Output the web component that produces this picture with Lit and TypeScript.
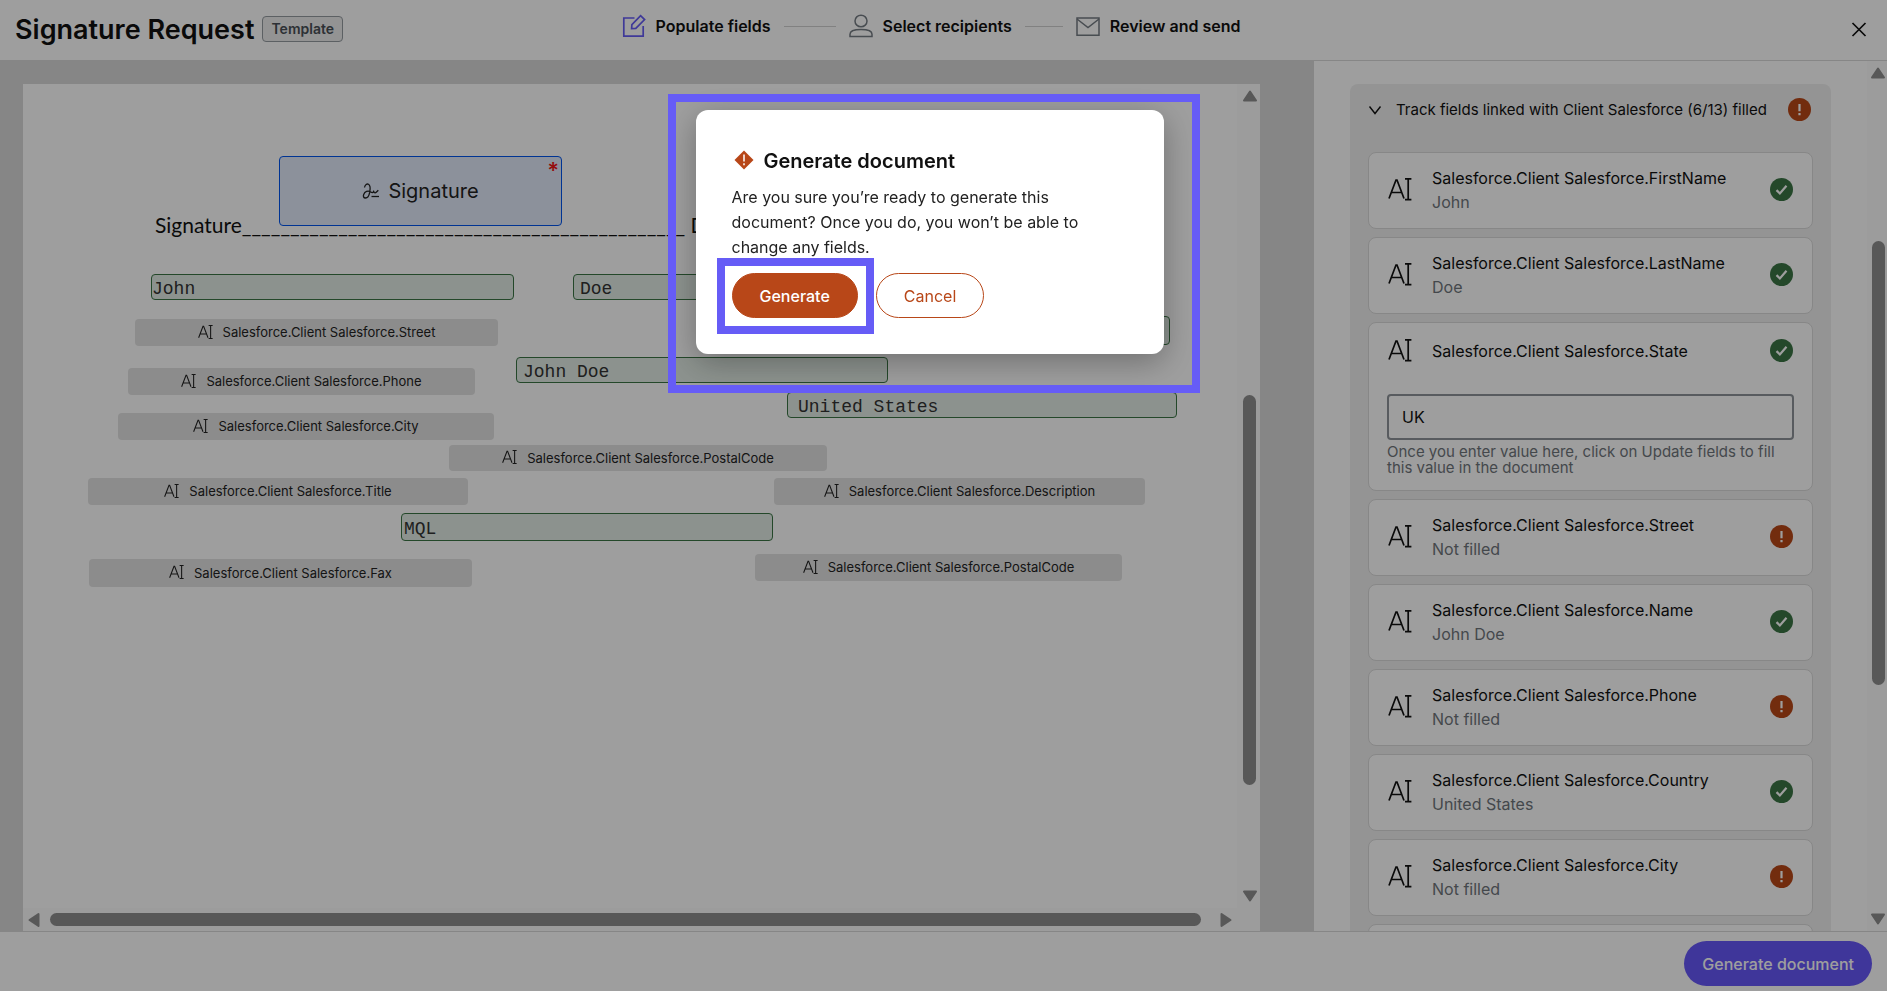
import { LitElement, html, css, svg, nothing } from "lit";
import { customElement, property, state } from "lit/decorators.js";
import { classMap } from "lit/directives/class-map.js";
import { styleMap } from "lit/directives/style-map.js";

interface TrackedField {
  name: string;
  value: string;
  filled: boolean;
  editable?: boolean;
}

interface Placement {
  x: number;
  y: number;
  w: number;
  h: number;
  text: string;
  pad?: number;
}

const PREFIX = "Salesforce.Client Salesforce.";

const TRACKED: TrackedField[] = [
  { name: "FirstName", value: "John", filled: true },
  { name: "LastName", value: "Doe", filled: true },
  { name: "State", value: "UK", filled: true, editable: true },
  { name: "Street", value: "Not filled", filled: false },
  { name: "Name", value: "John Doe", filled: true },
  { name: "Phone", value: "Not filled", filled: false },
  { name: "Country", value: "United States", filled: true },
  { name: "City", value: "Not filled", filled: false },
  { name: "PostalCode", value: "Not filled", filled: false },
];

/* Positions are measured from the corner of the paper. */
const EMPTY_FIELDS: Placement[] = [
  { x: 112, y: 235, w: 363, h: 27, text: "Street" },
  { x: 105, y: 284, w: 347, h: 27, text: "Phone" },
  { x: 95, y: 329, w: 376, h: 27, text: "City" },
  { x: 426, y: 361, w: 378, h: 26, text: "PostalCode" },
  { x: 65, y: 394, w: 380, h: 27, text: "Title" },
  { x: 751, y: 394, w: 371, h: 27, text: "Description" },
  { x: 66, y: 475, w: 383, h: 28, text: "Fax" },
  { x: 732, y: 470, w: 367, h: 27, text: "PostalCode" },
];

const FILLED_FIELDS: Placement[] = [
  { x: 128, y: 190, w: 363, h: 26, text: "John", pad: 0 },
  { x: 550, y: 190, w: 360, h: 26, text: "Doe", pad: 6 },
  { x: 777, y: 232, w: 370, h: 29, text: "UK", pad: 6 },
  { x: 493, y: 273, w: 372, h: 26, text: "John Doe", pad: 6 },
  { x: 764, y: 308, w: 390, h: 26, text: "United States", pad: 10 },
  { x: 378, y: 429, w: 372, h: 28, text: "MQL", pad: 2 },
];

const textFieldIcon = (size: number) => html`
  <svg width=${size} height=${size} viewBox="0 0 24 24" fill="none" stroke="currentColor" stroke-width="1.7" aria-hidden="true">
    <path d="M1 20.5 8 2h1L16 20.5M3.8 14.5h9.6" />
    <path d="M17 .9h6.400M17 21.600h6.400M20.200 .9v20.700" />
  </svg>
`;

const statusIcon = (filled: boolean) => html`
  <svg class="status" width="24" height="24" viewBox="0 0 24 24" role="img" aria-label=${filled ? "Filled" : "Not filled"}>
    <circle cx="11.5" cy="11.5" r="11.5" fill=${filled ? "#3a7444" : "#b84718"} />
    ${filled
      ? svg`<path d="M6.500 12.100l3.400 3.400 6.600-7.800" fill="none" stroke="#fff" stroke-width="2.2" />`
      : svg`<path d="M11.500 6v7.200M11.500 14.900v2.400" fill="none" stroke="#fff" stroke-width="2.2" />`}
  </svg>
`;

const arrow = (dir: "up" | "down" | "left" | "right") => {
  const turn = { up: 0, right: 90, down: 180, left: 270 }[dir];
  return html`
    <svg width="16" height="16" viewBox="0 0 16 16" aria-hidden="true">
      <path
        d="M8 3.5 14 12.5H2z"
        transform=${`rotate(${turn} 8 8)`}
        fill="#8e8e8e"
        stroke="#8e8e8e"
        stroke-width="2"
        stroke-linejoin="round"
      />
    </svg>
  `;
};

@customElement("scroll-rail")
class ScrollRail extends LitElement {
  @property() axis: "x" | "y" = "y";
  @property({ type: Number }) before = 0;
  @property({ type: Number }) size = 1;
  @property({ type: Number }) after = 0;

  static styles = css`
    :host {
      display: block;
      background: #fcfcfc;
    }
    .rail {
      display: flex;
      align-items: center;
      gap: 8px;
      height: 100%;
      box-sizing: border-box;
    }
    .y {
      flex-direction: column;
      padding: 4px 0 4px 2px;
    }
    .x {
      padding: 0 3px;
    }
    .track {
      display: flex;
      flex: 1;
      min-width: 0;
      min-height: 0;
    }
    .y .track {
      flex-direction: column;
      width: 13px;
    }
    .x .track {
      height: 13px;
    }
    .thumb {
      background: #8e8e8e;
      border-radius: 7px;
    }
    svg {
      flex: none;
    }
  `;

  render() {
    const vertical = this.axis === "y";
    return html`
      <div class=${classMap({ rail: true, y: vertical, x: !vertical })}>
        ${arrow(vertical ? "up" : "left")}
        <div class="track">
          <div style=${styleMap({ flexGrow: String(this.before) })}></div>
          <div class="thumb" style=${styleMap({ flexGrow: String(this.size) })}></div>
          <div style=${styleMap({ flexGrow: String(this.after) })}></div>
        </div>
        ${arrow(vertical ? "down" : "right")}
      </div>
    `;
  }
}

@customElement("field-card")
class FieldCard extends LitElement {
  @property({ attribute: false }) field!: TrackedField;

  static styles = css`
    :host {
      display: block;
    }
    .card {
      box-sizing: border-box;
      background: #fff;
      border: 1px solid #dadada;
      border-radius: 8px;
      padding: 13px 18px 14px;
      line-height: 24px;
    }
    .row {
      display: flex;
      align-items: center;
      gap: 20px;
      padding-left: 1px;
    }
    .names {
      flex: 1;
      min-width: 0;
    }
    .names > * {
      display: block;
    }
    .name {
      color: #111;
    }
    .value {
      color: #6f757b;
    }
    svg {
      flex: none;
    }
    .editable .row {
      height: 30px;
      margin-bottom: 28px;
    }
    .input {
      display: block;
      box-sizing: border-box;
      width: 100%;
      height: 46px;
      border: 2px solid #8e9499;
      border-radius: 4px;
      padding: 0 13px;
      background: #fff;
      color: #111;
      font: inherit;
    }
    .hint {
      margin: 4px 0 0;
      font-size: 15px;
      line-height: 16px;
      color: #6f757b;
    }
  `;

  render() {
    const { name, value, filled, editable } = this.field;
    return html`
      <div class=${classMap({ card: true, editable: !!editable })}>
        <div class="row">
          ${textFieldIcon(24)}
          <div class="names">
            ${editable
              ? html`<label class="name" for="value">${PREFIX}${name}</label>`
              : html`<span class="name">${PREFIX}${name}</span><span class="value">${value}</span>`}
          </div>
          ${statusIcon(filled)}
        </div>
        ${editable
          ? html`
              <input class="input" id="value" type="text" .value=${value} aria-describedby="hint" />
              <p class="hint" id="hint">Once you enter value here, click on Update fields to fill this value in the document</p>
            `
          : nothing}
      </div>
    `;
  }
}

@customElement("confirm-dialog")
class ConfirmDialog extends LitElement {
  static styles = css`
    :host {
      position: fixed;
      inset: 0;
      display: flex;
      justify-content: center;
      align-items: flex-start;
      padding: 110px 28px 0 0;
      background: rgba(0, 0, 0, 0.38);
    }
    .dialog {
      position: relative;
      box-sizing: border-box;
      width: 468px;
      padding: 38px 36px 36px;
      background: #fff;
      border-radius: 12px;
      box-shadow: 0 8px 32px rgba(0, 0, 0, 0.3);
    }
    .title {
      display: flex;
      align-items: center;
      gap: 8px;
      margin: 0 0 11px;
      font-size: 20px;
      font-weight: 600;
      line-height: 26px;
      color: #111;
    }
    .message {
      margin: 0 0 13px;
      max-width: 352px;
      line-height: 25px;
      color: #222;
    }
    .actions {
      display: flex;
      gap: 18px;
    }
    .slot {
      position: relative;
    }
    .button {
      box-sizing: border-box;
      height: 45px;
      padding: 0 27px;
      border: 1px solid #b84718;
      border-radius: 23px;
      background: #fff;
      color: #b84718;
      font: inherit;
    }
    .primary {
      background: #b84718;
      color: #fff;
      font-weight: 500;
    }
    .marker {
      position: absolute;
      border: 8px solid #665cf6;
      pointer-events: none;
    }
    .around-dialog {
      inset: -16px -36px -39px -28px;
    }
    .around-button {
      inset: -15px -16px -16px -15px;
    }
  `;

  render() {
    return html`
      <div class="dialog" role="dialog" aria-modal="true" aria-labelledby="title">
        <h2 class="title" id="title">
          <svg width="24" height="24" viewBox="0 0 24 24" aria-hidden="true">
            <path d="M12 1.5 21.5 11 12 20.5 2.5 11z" fill="#b84718" />
            <path d="M12 5.5v7M12 14.2v2" stroke="#fff" stroke-width="1.5" />
          </svg>
          Generate document
        </h2>
        <p class="message">Are you sure you’re ready to generate this document? Once you do, you won’t be able to change any fields.</p>
        <div class="actions">
          <div class="slot">
            <button class="button primary" type="button">Generate</button>
            <div class="marker around-button"></div>
          </div>
          <button class="button" type="button">Cancel</button>
        </div>
        <div class="marker around-dialog"></div>
      </div>
    `;
  }
}

@customElement("app-root")
class AppRoot extends LitElement {
  @state() private expanded = true;

  static styles = css`
    :host {
      display: grid;
      grid-template-rows: auto minmax(0, 1fr) auto;
      height: 100vh;
      overflow: hidden;
      background: #fff;
      color: #111;
      font: 16px/24px Inter, "Liberation Sans", sans-serif;
    }
    .top {
      display: grid;
      grid-template-columns: 1fr auto 1fr;
      align-items: center;
      box-sizing: border-box;
      height: 61px;
      padding: 0 16px 0 15px;
      border-bottom: 1px solid #d9d9d9;
    }
    .heading {
      display: flex;
      align-items: center;
      gap: 8px;
    }
    .title {
      margin: 0;
      font-size: 27px;
      font-weight: 600;
      line-height: 32px;
    }
    .badge {
      margin-bottom: 2px;
      padding: 0 8px;
      border: 1px solid #959ba0;
      border-radius: 4px;
      background: #ededed;
      color: #4a5056;
      font-size: 14px;
      font-weight: 600;
    }
    .steps {
      display: flex;
      align-items: center;
      gap: 13px;
      margin: 0 24px 8px 0;
      padding: 0;
      list-style: none;
      font-weight: 600;
    }
    .step {
      display: flex;
      align-items: center;
      gap: 10px;
      color: #757c84;
    }
    .step.current {
      color: #665cf6;
    }
    .step .label {
      color: #111;
    }
    .join {
      width: 52px;
      height: 1px;
      background: #d0d0d0;
    }
    .join.short {
      width: 38px;
    }
    .close {
      justify-self: end;
      display: grid;
      padding: 0;
      border: 0;
      background: none;
      color: #111;
    }
    .body {
      display: grid;
      grid-template-columns: minmax(0, 1fr) 573px;
      min-height: 0;
    }
    .desk {
      display: grid;
      padding: 23px 54px 0 23px;
      background: #d9d9d9;
      min-height: 0;
    }
    .viewer {
      display: grid;
      grid-template-columns: minmax(0, 1fr) 23px;
      grid-template-rows: minmax(0, 1fr) 23px;
      background: #fcfcfc;
    }
    .paper {
      position: relative;
      overflow: hidden;
      background: #fff;
    }
    .line {
      position: absolute;
      left: 132px;
      top: 129px;
      margin: 0;
      font: 21px/24px Lato, "Open Sans", sans-serif;
      white-space: nowrap;
    }
    .signature {
      position: absolute;
      box-sizing: border-box;
      display: flex;
      align-items: center;
      justify-content: center;
      gap: 8px;
      border: 1px solid #0055ee;
      border-radius: 4px;
      background: #e3ebfb;
      color: #222;
      font-size: 20px;
    }
    .required {
      position: absolute;
      top: 1px;
      right: 2px;
      color: #f01818;
      font-size: 22px;
      font-weight: 600;
      line-height: 24px;
    }
    .field {
      position: absolute;
      box-sizing: border-box;
      display: flex;
      align-items: center;
      white-space: nowrap;
      border-radius: 4px;
    }
    .empty {
      justify-content: center;
      gap: 10px;
      padding-bottom: 1px;
      background: #e3e3e3;
      color: #222;
      font-size: 13px;
    }
    .filled {
      border: 1px solid #3a7444;
      background: #e2ece5;
      color: #333;
      font: 18px/20px "Liberation Mono", monospace;
      padding-top: 3px;
    }
    .side {
      display: grid;
      grid-template-columns: minmax(0, 1fr) 20px;
      min-height: 0;
      overflow: hidden;
    }
    .scroll {
      padding: 23px 36px 0;
      overflow: hidden;
    }
    .group {
      padding: 13px 18px 24px;
      border-radius: 8px;
      background: #efefef;
    }
    .toggle {
      display: flex;
      align-items: center;
      width: 100%;
      height: 26px;
      margin-bottom: 29px;
      padding: 0 1px 0 0;
      border: 0;
      background: none;
      color: #111;
      font: inherit;
      font-size: 15px;
      text-align: left;
    }
    .toggle .text {
      flex: 1;
      margin-left: 14px;
      white-space: nowrap;
    }
    .cards {
      display: grid;
      gap: 8px;
      margin: 0;
      padding: 0;
      list-style: none;
    }
    .bottom {
      display: flex;
      justify-content: flex-end;
      align-items: center;
      box-sizing: border-box;
      height: 60px;
      padding: 4px 15px 0;
      border-top: 1px solid #d9d9d9;
    }
    .generate {
      height: 45px;
      padding: 0 18px;
      border: 0;
      border-radius: 23px;
      background: #6757f8;
      color: #fff;
      font: inherit;
      font-weight: 500;
    }
  `;

  private box(p: Placement) {
    return styleMap({
      left: `${p.x}px`,
      top: `${p.y}px`,
      width: `${p.w}px`,
      height: `${p.h}px`,
      paddingLeft: p.pad === undefined ? undefined : `${p.pad}px`,
    });
  }

  private renderHeader() {
    return html`
      <header class="top">
        <div class="heading">
          <h1 class="title">Signature Request</h1>
          <span class="badge">Template</span>
        </div>
        <ol class="steps">
          <li class="step current" aria-current="step">
            <svg width="24" height="24" viewBox="0 0 24 24" fill="none" stroke="currentColor" stroke-width="1.7" aria-hidden="true">
              <path d="M12.5 4H1.8v18.2h19.4V12" />
              <path d="M9.6 14.6 9.9 10.6 18.6 1.6 22.6 5.6 13.8 14.3z" />
            </svg>
            <span class="label">Populate fields</span>
          </li>
          <li class="join" aria-hidden="true"></li>
          <li class="step">
            <svg width="24" height="24" viewBox="0 0 24 24" fill="none" stroke="currentColor" stroke-width="1.5" aria-hidden="true">
              <ellipse cx="12" cy="7" rx="6" ry="5.8" />
              <path d="M1 22.6v-2.4c0-3 4-4.6 11-4.6s11 1.6 11 4.6v2.4z" />
            </svg>
            <span class="label">Select recipients</span>
          </li>
          <li class="join short" aria-hidden="true"></li>
          <li class="step">
            <svg width="24" height="24" viewBox="0 0 24 24" fill="none" stroke="currentColor" stroke-width="1.5" aria-hidden="true">
              <path d="M1 4h22v17.2H1z" />
              <path d="M1 5l11 8.5L23 5" />
            </svg>
            <span class="label">Review and send</span>
          </li>
        </ol>
        <button class="close" type="button" aria-label="Close">
          <svg width="24" height="24" viewBox="0 0 24 24" fill="none" stroke="currentColor" stroke-width="1.7" aria-hidden="true">
            <path d="M5.5 5l13 13M18.5 5l-13 13" />
          </svg>
        </button>
      </header>
    `;
  }

  private renderDocument() {
    return html`
      <section class="desk" aria-label="Document">
        <div class="viewer">
          <div class="paper">
            <p class="line">Signature${"_".repeat(46)} D</p>
            <div class="signature" style=${this.box({ x: 256, y: 72, w: 283, h: 70, text: "" })}>
              <svg width="18" height="18" viewBox="0 0 18 18" fill="none" stroke="currentColor" stroke-width="1.3" aria-hidden="true">
                <path d="M2.500 5.500C3 2.500 5 1.500 6.500 2.300c2.200 1.200 1.800 5 1.200 8-.6 3-2 5.700-4.200 5.700-2 0-2.500-1.800-1.800-3.600C2.800 9.500 6 8.300 8.300 9.800c2 1.300 2.400 1.200 3.400-.4.8 2.200 1.600 2 4.600-1.200" />
                <path d="M9.500 14.500h7.500" />
              </svg>
              <span>Signature</span>
              <span class="required">*</span>
            </div>
            ${FILLED_FIELDS.map((f) => html`<div class="field filled" style=${this.box(f)}>${f.text}</div>`)}
            ${EMPTY_FIELDS.map(
              (f) => html`<div class="field empty" style=${this.box(f)}>${textFieldIcon(15)}<span>${PREFIX}${f.text}</span></div>`
            )}
          </div>
          <scroll-rail axis="y" .before=${283} .size=${390} .after=${95}></scroll-rail>
          <scroll-rail axis="x" .before=${0} .size=${1151} .after=${9}></scroll-rail>
        </div>
      </section>
    `;
  }

  private renderSide() {
    return html`
      <aside class="side" aria-label="Fields">
        <div class="scroll">
          <div class="group">
            <button
              class="toggle"
              type="button"
              aria-expanded=${this.expanded ? "true" : "false"}
              @click=${() => (this.expanded = !this.expanded)}
            >
              <svg width="14" height="14" viewBox="0 0 14 14" fill="none" stroke="currentColor" stroke-width="1.4" aria-hidden="true">
                <path d="M1.500 3.500 7 10.500l5.500-7" />
              </svg>
              <span class="text">Track fields linked with Client Salesforce (6/13) filled</span>
              ${statusIcon(false)}
            </button>
            ${this.expanded
              ? html`<ul class="cards">
                  ${TRACKED.map((f) => html`<li><field-card .field=${f}></field-card></li>`)}
                </ul>`
              : nothing}
          </div>
        </div>
        <scroll-rail axis="y" .before=${152} .size=${444} .after=${218}></scroll-rail>
      </aside>
    `;
  }

  render() {
    return html`
      ${this.renderHeader()}
      <main class="body">${this.renderDocument()} ${this.renderSide()}</main>
      <footer class="bottom">
        <button class="generate" type="button">Generate document</button>
      </footer>
      <confirm-dialog></confirm-dialog>
    `;
  }
}
